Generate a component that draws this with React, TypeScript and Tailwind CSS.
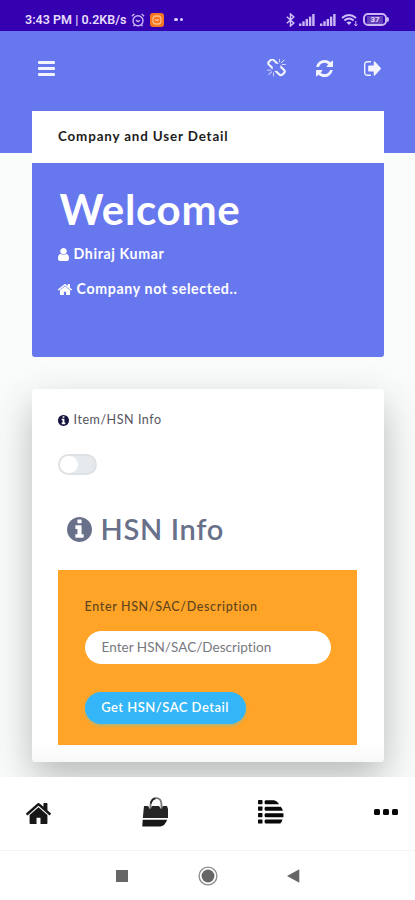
import React from "react";

type GlyphProps = { d: string; box: string; className?: string };

const Glyph = ({ d, box, className }: GlyphProps) => (
  <svg viewBox={box} className={className} fill="currentColor" preserveAspectRatio="none">
    <path d={d} />
  </svg>
);

const REFRESH =
  "M1511 1056q0 5-1 7-64 268-268 434.5t-478 166.5q-146 0-282.5-55t-243.5-157l-129 129q-19 19-45 19t-45-19-19-45v-448q0-26 19-45t45-19h448q26 0 45 19t19 45-19 45l-137 137q71 66 161 102t187 36q134 0 250-65t186-179q11-17 53-117 8-23 30-23h192q13 0 22.5 9.5t9.5 22.5zm25-800v448q0 26-19 45t-45 19h-448q-26 0-45-19t-19-45 19-45l138-138q-148-137-349-137-134 0-250 65t-186 179q-11 17-53 117-8 23-30 23h-199q-13 0-22.5-9.5t-9.5-22.5v-7q65-268 270-434.5t480-166.5q146 0 284 55.5t245 156.5l130-129q19-19 45-19t45 19 19 45z";
const HOME =
  "M1472 992v480q0 26-19 45t-45 19h-384v-384h-256v384h-384q-26 0-45-19t-19-45v-480q0-1 .5-3t.5-3l575-474 575 474q1 2 1 6zm223-69l-62 74q-8 9-21 11h-3q-13 0-21-7l-692-577-692 577q-12 8-24 7-13-2-21-11l-62-74q-8-10-7-23.5t11-21.5l719-599q32-26 76-26t76 26l244 204v-195q0-14 9-23t23-9h192q14 0 23 9t9 23v408l219 182q10 8 11 21.5t-7 23.5z";
const INFO =
  "M1152 1376v-160q0-14-9-23t-23-9h-96v-512q0-14-9-23t-23-9h-320q-14 0-23 9t-9 23v160q0 14 9 23t23 9h96v320h-96q-14 0-23 9t-9 23v160q0 14 9 23t23 9h448q14 0 23-9t9-23zm-128-896v-160q0-14-9-23t-23-9h-192q-14 0-23 9t-9 23v160q0 14 9 23t23 9h192q14 0 23-9t9-23zm640 416q0 209-103 385.5t-279.5 279.5-385.5 103-385.5-103-279.5-279.5-103-385.5 103-385.5 279.5-279.5 385.5-103 385.5 103 279.5 279.5 103 385.5z";
const SIGN_OUT =
  "M640 1440q0 4 1 20t.5 26.5-3 23.5-10 19.5-20.5 6.5h-320q-119 0-203.5-84.5t-84.5-203.5v-704q0-119 84.5-203.5t203.5-84.5h320q13 0 22.5 9.5t9.5 22.5q0 4 1 20t.5 26.5-3 23.5-10 19.5-20.5 6.5h-320q-66 0-113 47t-47 113v704q0 66 47 113t113 47h312l11.5 1 11.5 3 8 5.5 7 9 2 13.5zm928-544q0 26-19 45l-544 544q-19 19-45 19t-45-19-19-45v-288h-448q-26 0-45-19t-19-45v-384q0-26 19-45t45-19h448v-288q0-26 19-45t45-19 45 19l544 544q19 19 19 45z";
const USER =
  "M1536 1399q0 109-62.5 187t-150.5 78h-854q-88 0-150.5-78t-62.5-187q0-85 8.5-160.5t31.5-152 58.5-131 94-89 134.5-34.5q131 128 313 128t313-128q76 0 134.5 34.5t94 89 58.5 131 31.5 152 8.5 160.5zm-256-887q0 159-112.5 271.5t-271.5 112.5-271.5-112.5-112.5-271.5 112.5-271.5 271.5-112.5 271.5 112.5 112.5 271.5z";
const BROKEN_LINK =
  "M503 1271l-256 256q-10 9-23 9-12 0-23-9-9-10-9-23t9-23l256-256q10-9 23-9t23 9q9 10 9 23t-9 23zm169 41v320q0 14-9 23t-23 9-23-9-9-23v-320q0-14 9-23t23-9 23 9 9 23zm-224-224q0 14-9 23t-23 9h-320q-14 0-23-9t-9-23 9-23 23-9h320q14 0 23 9t9 23zm1264 128q0 120-85 203l-147 146q-83 83-203 83-121 0-204-85l-334-335q-21-21-42-56l239-18 273 274q27 27 68 27.5t68-26.5l147-146q28-28 28-67 0-40-28-68l-274-275 18-239q35 21 56 42l336 336q84 86 84 204zm-617-724l-239 18-273-274q-28-28-68-28-39 0-68 27l-147 146q-28 28-28 67 0 40 28 68l274 274-18 240q-35-21-56-42l-336-336q-84-86-84-204 0-120 85-203l147-146q83-83 203-83 121 0 204 85l334 335q21 21 42 56zm633 84q0 14-9 23t-23 9h-320q-14 0-23-9t-9-23 9-23 23-9h320q14 0 23 9t9 23zm-544-544v320q0 14-9 23t-23 9-23-9-9-23v-320q0-14 9-23t23-9 23 9 9 23zm407 151l-256 256q-11 9-23 9t-23-9q-9-10-9-23t9-23l256-256q10-9 23-9t23 9q9 10 9 23t-9 23z";

const Signal = ({ className }: { className?: string }) => (
  <svg viewBox="0 0 16 12" className={className} fill="#c9b6f3">
    <rect x="0" y="9.5" width="2.4" height="2.5" />
    <rect x="3.3" y="7.3" width="2.4" height="4.7" />
    <rect x="6.6" y="5" width="2.4" height="7" />
    <rect x="9.9" y="2.6" width="2.4" height="9.4" />
    <rect x="13.2" y="0" width="2.4" height="12" />
  </svg>
);

function StatusBar() {
  return (
    <div className="flex h-[31px] items-center bg-[#3500b0] pt-2 pl-[25px] font-['Roboto',sans-serif] text-[#e6dcfb]">
      <span className="w-[103px] shrink-0 whitespace-nowrap text-[12.5px] leading-4 font-semibold tracking-[0.02px]">
        3:43 PM | 0.2KB/s
      </span>
      <svg viewBox="0 0 14 14" className="ml-[3px] h-3.5 w-3.5" fill="none" stroke="#c9b6f3" strokeWidth="1.4">
        <circle cx="7" cy="7.7" r="5" />
        <path d="M.8 3.2 3.4 1M13.2 3.2 10.6 1M4.8 7.2 7 8.6l2-1.4M3.5 11.8l-1 1.3M10.5 11.8l1 1.3" />
      </svg>
      <svg viewBox="0 0 14 14" className="ml-[5px] h-3.5 w-3.5">
        <rect width="14" height="14" rx="3" fill="#f57722" />
        <rect x="3" y="3" width="8" height="8" rx="3" fill="none" stroke="#ffbd8b" strokeWidth="1.3" />
        <path d="M5 6.5q2 2 4 0" fill="none" stroke="#ffe0c9" />
      </svg>
      <div className="ml-[10px] flex gap-[2px]">
        <i className="size-[3.5px] rounded-full bg-[#dccffa]" />
        <i className="size-[3.5px] rounded-full bg-[#dccffa]" />
      </div>
      <svg viewBox="0 0 9 14" className="ml-[103px] h-3.5 w-[9px]" fill="none" stroke="#cfc0f5" strokeWidth="1.5">
        <path d="M.8 3.8 7.8 10 4.5 13V1l3.3 3L.8 10.2" />
      </svg>
      <Signal className="ml-1 h-3 w-4" />
      <Signal className="ml-[5px] h-3 w-4" />
      <svg viewBox="0 0 18 14" className="ml-[5px] h-3.5 w-[18px]" fill="none" stroke="#cfc0f5" strokeWidth="2">
        <path d="M1 5q7-6 14 0M3.4 7.5q4.6-4 9.2 0" />
        <path d="M5.5 9.5q2.5-2 5 0L8 12z" fill="#cfc0f5" stroke="none" />
        <path d="M14.8 8v5M13.3 11.3l1.5 1.7 1.5-1.7" strokeWidth="1" />
      </svg>
      <div className="ml-1 flex h-[13px] w-6 items-center justify-center rounded-[5px] border-2 border-[#c9b6f3] text-[8px] leading-none font-bold">
        <span className="w-4 bg-[#6540bd] text-center leading-[8px]">37</span>
      </div>
      <i className="h-[5px] w-[2px] rounded-r bg-[#c9b6f3]" />
    </div>
  );
}

function TopBar() {
  return (
    <div className="flex h-[74px] items-center pr-[34px] pl-[38px] text-[#f3f4ff]">
      <div className="flex w-[17px] flex-col gap-[3px]">
        <i className="h-[3px] rounded-[1px] bg-current" />
        <i className="h-[3px] rounded-[1px] bg-current" />
        <i className="h-[3px] rounded-[1px] bg-current" />
      </div>
      <Glyph d={BROKEN_LINK} box="64 64 1664 1664" className="mr-px ml-auto h-[18px] w-[19px]" />
      <Glyph d={REFRESH} box="0 128 1536 1536" className="ml-[29px] h-[17px] w-[17px]" />
      <Glyph d={SIGN_OUT} box="0 256 1568 1280" className="ml-[31px] h-[15px] w-[17px]" />
    </div>
  );
}

function CompanyCard() {
  return (
    <section className="mx-auto h-[246px] w-[352px] overflow-hidden rounded-b-[3px] bg-[#6777ee] text-white">
      <div className="h-[52px] bg-white pt-[15px] pl-[26.5px]">
        <h2 className="whitespace-nowrap text-[13.4px] leading-5 font-bold tracking-[0.85px] text-[#1c1c20]">
          Company and User Detail
        </h2>
      </div>
      <div className="pt-[21px] pl-[26px]">
        <h1 className="ml-[2px] whitespace-nowrap text-[42px] leading-[50px] font-bold tracking-[0.7px]">Welcome</h1>
        <div className="mt-[10px] flex items-center text-[14.2px] leading-5 font-bold">
          <Glyph d={USER} box="256 128 1280 1536" className="h-[13px] w-[11px]" />
          <span className="ml-[5px] whitespace-nowrap tracking-[0.62px]">Dhiraj Kumar</span>
        </div>
        <div className="mt-[15px] flex items-center text-[14.2px] leading-5 font-bold">
          <Glyph d={HOME} box="89 253 1614 1283" className="h-[11px] w-[14px]" />
          <span className="ml-[5px] whitespace-nowrap tracking-[0.64px]">Company not selected..</span>
        </div>
      </div>
    </section>
  );
}

function HsnCard() {
  return (
    <section className="mx-auto mt-8 h-[373px] w-[352px] rounded-[4px] bg-gradient-to-b from-white from-95% to-[#f8f8f8] pt-[21px] pl-[26px] shadow-[0_16px_38px_rgba(50,58,54,0.34)]">
      <div className="flex h-5 items-center">
        <Glyph d={INFO} box="128 128 1536 1536" className="h-[11px] w-[11px] text-[#17133f]" />
        <span className="ml-[5px] whitespace-nowrap text-[12.5px] tracking-[0.56px] text-[#55555f]">Item/HSN Info</span>
      </div>
      <div className="mt-6 h-[21px] w-[39px] rounded-full border-2 border-[#dfe2e5] bg-[#e7eaed]">
        <i className="block h-[17px] w-[18px] rounded-full bg-white" />
      </div>
      <div className="mt-[34px] ml-[9px] flex h-10 items-center text-[#69708a]">
        <Glyph d={INFO} box="128 128 1536 1536" className="h-[25px] w-[25px]" />
        <h2 className="ml-[9px] whitespace-nowrap text-[29px] leading-10 font-semibold tracking-[0.65px]">HSN Info</h2>
      </div>
      <form className="mt-[21px] flex h-[175px] w-[299px] flex-col items-start bg-[#ffa426] pt-[27px] pl-[27px] [font-variant-ligatures:none]">
        <label className="whitespace-nowrap text-[12.5px] leading-5 font-medium tracking-[0.65px] text-[#62451f]">
          Enter HSN/SAC/Description
        </label>
        <div className="mt-[14px] flex h-[33px] w-[246px] items-center rounded-full bg-white pl-[17px] text-[13.5px] text-[#777980]">
          <span className="whitespace-nowrap tracking-[0.04px]">Enter HSN/SAC/Description</span>
        </div>
        <button
          type="button"
          className="mt-7 h-[32px] w-[161px] rounded-full bg-[#33b5f7] text-center text-[13px] font-semibold tracking-[0.48px] whitespace-nowrap text-white shadow-[0_2px_3px_#b5b477]"
        >
          Get HSN/SAC Detail
        </button>
      </form>
    </section>
  );
}

function TabBar() {
  return (
    <nav className="relative flex h-[73px] items-center bg-white pr-[17px] pb-[3px] pl-[26px] text-[#171717]">
      <Glyph d={HOME} box="89 253 1614 1283" className="mt-[2px] h-[21px] w-[25px]" />
      <svg viewBox="0 0 26 30" className="ml-[91px] h-[30px] w-[26px]">
        <path d="M2 9h4l2 3 2-3h7l2 3 2-3h4l1 3v9H.8z" fill="#252525" />
        <path d="M.7 22.8h24.4Q23 29 18.5 29.5H.3z" fill="#171717" />
        <path d="M8.5 11V7.5C9 3.8 11.2 1.2 14.3 1.2s5 2.6 5.2 6.3V11" fill="none" stroke="#777" strokeWidth="1.8" />
        <path d="M8.7 6.5q1.4-4.7 4.6-5.2" fill="none" stroke="#222" strokeWidth="1.8" />
      </svg>
      <svg viewBox="0 0 26 24" className="ml-[90px] h-6 w-[26px]" fill="#090909">
        <rect x="0" y="0" width="4.5" height="4.2" rx=".7" />
        <rect x="0" y="6.6" width="4.5" height="4.2" rx=".7" />
        <rect x="0" y="13" width="4.5" height="4.2" rx=".7" />
        <rect x="0" y="19.4" width="4.5" height="4.2" rx=".7" />
        <path d="M7.5.2h8.6q3 .6 5 4H7.5q-1-.4-1-2t1-2zM7.5 6.8h15.3q1.8 1.8 2 4H7.5q-1-.6-1-2t1-2zM7.5 13.2h17.9q.2 2.4 0 4H7.5q-1-.6-1-2t1-2zM7.5 19.6h17q-.7 3-2.2 4H7.5q-1-.6-1-2t1-2z" />
      </svg>
      <div className="ml-auto flex gap-[3px]">
        <i className="size-1.5 rounded-[1.5px] bg-[#080808]" />
        <i className="size-1.5 rounded-[1.5px] bg-[#080808]" />
        <i className="size-1.5 rounded-[1.5px] bg-[#080808]" />
      </div>
    </nav>
  );
}

function SystemNav() {
  return (
    <div className="relative flex h-[50px] items-center border-t border-[#f4f4f4] bg-white pl-[116px]">
      <i className="size-3 bg-[#666]" />
      <svg viewBox="0 0 20 20" className="ml-[70px] h-5 w-5">
        <circle cx="10" cy="10" r="8.9" fill="white" stroke="#8b8b8b" strokeWidth="1.3" />
        <circle cx="10" cy="10" r="6.4" fill="#666" />
      </svg>
      <svg viewBox="0 0 13 14" className="ml-[69px] h-3.5 w-[13px]">
        <path d="M0 7 12.3.3v13.4z" fill="#666" />
      </svg>
    </div>
  );
}

export default function App() {
  return (
    <div className="flex h-[900px] w-[415px] flex-col overflow-hidden bg-[#fafcfb] font-['Lato',sans-serif]">
      <StatusBar />
      <main className="h-[746px] overflow-hidden bg-[linear-gradient(#6777ee_0_122px,#fafcfb_122px)]">
        <TopBar />
        <div className="pt-[6px]">
          <CompanyCard />
          <HsnCard />
        </div>
      </main>
      <TabBar />
      <SystemNav />
    </div>
  );
}
